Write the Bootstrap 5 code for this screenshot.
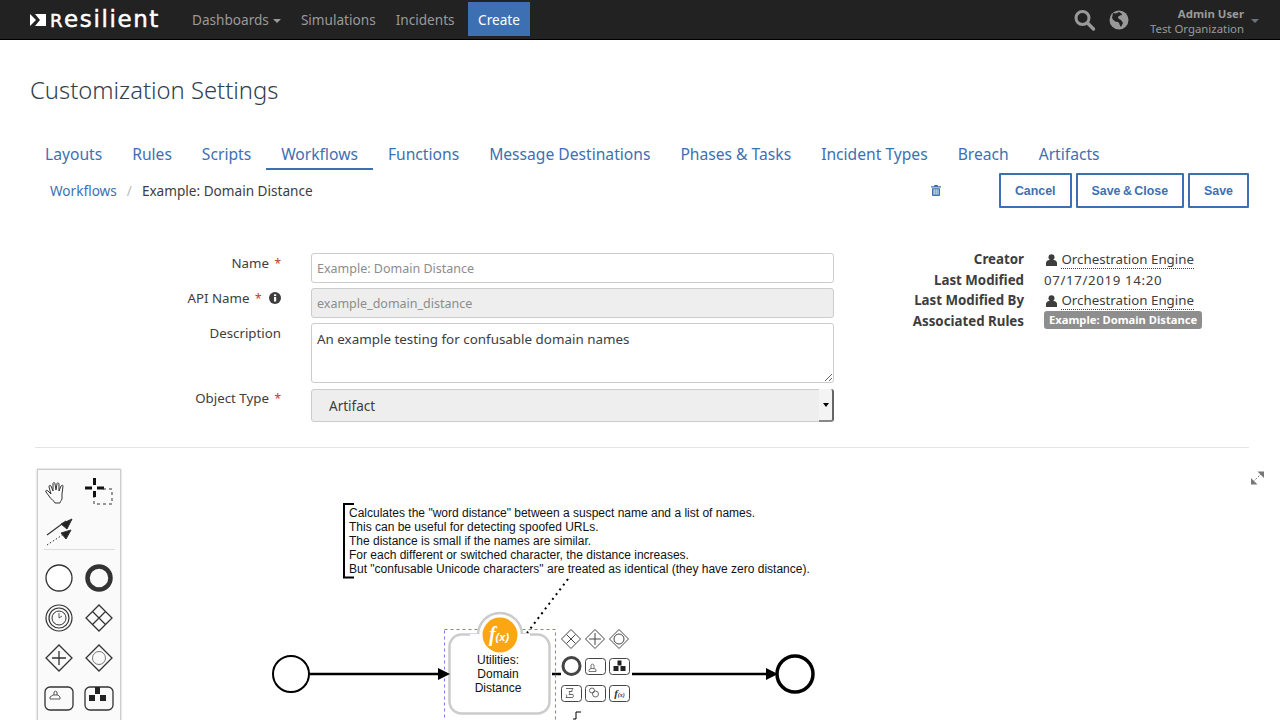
<!DOCTYPE html>
<html lang="en">
<head>
<meta charset="utf-8">
<title>Customization Settings</title>
<link rel="stylesheet" href="https://cdn.jsdelivr.net/npm/bootstrap@5.3.0/dist/css/bootstrap.min.css">
<style>
html,body{height:720px;overflow:hidden}
body{font-family:"Noto Sans",Roboto,sans-serif;font-size:14px;color:#3d3d3d;background:#fff}
.topbar{height:40px;background:#222;border-bottom:1px solid #000;padding:0 0 0 30px;align-items:flex-start;flex-wrap:nowrap}
.brand{display:flex;align-items:center;gap:4px;height:39px;width:152px;padding:0;margin:0;color:#fff;font:400 23px/1 "DejaVu Sans",sans-serif;letter-spacing:1.6px;-webkit-text-stroke:.5px #fff}
.brand:hover{color:#fff}
.brand b{font-weight:400;font-size:18px}
.topbar .nav-link{color:#9a9a9a;font-size:13.6px;padding:0 10px;line-height:39px;white-space:nowrap}
.topbar .nav-link.make{background:#3d70b2;color:#fff;height:34px;line-height:36px;margin:2px 0 0 3px;padding:0 10.500px}
.caret-dn{display:inline-block;border:4px solid transparent;border-top-color:currentColor;border-bottom:0;margin-left:4px;vertical-align:2px}
.who{color:#9a9a9a;text-align:right;font-size:11.4px;line-height:15px;padding-top:6px;white-space:nowrap}
.who b{display:block;font-weight:700}
.page-head{font-family:"Noto Sans",sans-serif;font-weight:300;font-size:23.8px;line-height:30px;color:#2f3f4f;margin:35px 30px 0;height:30px}
.tabbar{margin:34px 30px 0;gap:0;flex-wrap:nowrap}
.tabbar .nav-link{font-size:15.63px;line-height:20px;color:#3d70b2;padding:5px 15px;border-bottom:2px solid transparent;white-space:nowrap;height:31px}
.tabbar .nav-link.active{border-bottom-color:#3d70b2}
.crumb-row{margin:3px 31px 0 30px;height:35px;align-items:center}
.crumb-row .breadcrumb{margin:2px 0 0 20px;font-size:13.6px;--bs-breadcrumb-divider-color:#bbb;--bs-breadcrumb-item-active-color:#3d3d3d;--bs-breadcrumb-item-padding-x:10px}
.crumb-row .breadcrumb a{color:#3d70b2;text-decoration:none}
.act{border:2px solid #3d70b2;color:#3d70b2;background:#fff;border-radius:1px;font:700 12.4px/1 "Liberation Sans",sans-serif;height:35px;padding:2px 14px 0;word-spacing:-1px}
.act:hover{color:#3d70b2;background:#fff;border-color:#3d70b2}
.bin{margin-right:58px;color:#3d70b2;line-height:1}
.form-area{margin:45px 30px 0;align-items:flex-start}
.fgrid{display:grid;grid-template-columns:251px 523px;column-gap:30px;row-gap:5px;width:804px}
.fgrid label{text-align:right;font-size:13.3px;line-height:20px;padding-top:0;margin:0;white-space:nowrap}
.fgrid label i{color:#c0392b;font-style:normal;font-size:12px;margin-left:2px}
.fgrid .form-control,.fgrid .form-select{border:1px solid #ccc;border-radius:3px;font-size:12.5px;padding:0 5px;height:30px;color:#3d3d3d;box-shadow:none}
.fgrid .form-control::placeholder{color:#8c8c8c}
.fgrid .form-control:disabled{background:#eee;color:#8c8c8c;opacity:1}
.fgrid textarea.form-control{height:60px;padding-top:5px;font-size:13.4px;line-height:20px;resize:vertical}
.fgrid .form-select{height:33px;background:#eee;padding-left:17px;padding-top:2px;margin-top:1px;font-size:13.5px;width:523px}
.picker{position:relative;height:34px}
.picker span{position:absolute;right:0;top:1px;width:15px;height:33px;border-right:2px solid #666;border-bottom:2px solid #888;border-radius:0 3px 3px 0;background:#f4f4f4;display:flex;align-items:center;justify-content:center}
.picker span::after{content:"";border:3px solid transparent;border-top:4px solid #000;border-bottom:0}
.meta{display:grid;grid-template-columns:190px auto;column-gap:20px;font-size:13.3px;line-height:20.5px;margin-top:-4px}
.meta dt{text-align:right;font-weight:700;margin:0}
.meta dd{margin:0;white-space:nowrap}
.stamp{letter-spacing:.62px}
.owner{border-bottom:1px dotted #3d3d3d;display:inline-block;line-height:17px}
.who-ico{margin:0 1px 0 2px}
.tag{display:inline-block;background:#8e8e8e;color:#fff;font-weight:700;font-size:11.2px;line-height:18px;border-radius:3px;padding:0 5px;vertical-align:top;margin-top:0}
.rule-line{margin:25px 31px 0 35px;border-top:1px solid #e5e5e5;opacity:1}
.canvas{position:relative;height:272px}
.canvas svg.flow{position:absolute;left:0;top:0;width:1280px;height:272px}
.canvas text{font-family:"Liberation Sans",Arial,sans-serif;font-size:12px;fill:#111}
.palette{position:absolute;left:37px;top:21px;width:84px;height:260px;background:#fafafa;border:1px solid #ccc;box-shadow:0 0 2px rgba(0,0,0,.25)}
.palette svg{display:block}
</style>
</head>
<body>
<nav class="navbar topbar d-flex">
  <a class="brand text-decoration-none" href="#">
    <svg width="16" height="14" viewBox="0 0 16 14"><polygon points="0,1 6,7 0,13" fill="#fff"/><polygon points="5,1 16,1 16,13 5,13 10,7" fill="#fff"/></svg>
    <span><b>R</b>esilient</span>
  </a>
  <ul class="nav flex-nowrap">
    <li class="nav-item"><a class="nav-link" href="#">Dashboards<span class="caret-dn"></span></a></li>
    <li class="nav-item"><a class="nav-link" href="#">Simulations</a></li>
    <li class="nav-item"><a class="nav-link" href="#">Incidents</a></li>
    <li class="nav-item"><a class="nav-link make" href="#">Create</a></li>
  </ul>
  <div class="d-flex ms-auto align-items-start">
    <svg class="mt-2" width="24" height="24" viewBox="0 0 24 24" fill="none" stroke="#999"><circle cx="9.500" cy="10" r="6.500" stroke-width="3"/><path d="M14.500 15l6 6" stroke-width="3.400" stroke-linecap="round"/></svg>
    <svg class="mt-2" style="margin-left:12px" width="20" height="24" viewBox="0 0 20 24"><circle cx="10" cy="12" r="9.500" fill="#999"/><path d="M4 5c3 1 4 0 6-1 1 1 3 1 3 3-2 0-3 1-4 2 0 2 2 2 3 3l2 3-2 4c-2-2-1-4-3-5-3 0-5-2-6-4z" fill="#222"/></svg>
    <div class="who" style="margin-left:21px"><b>Admin User</b>Test Organization</div>
    <span class="caret-dn text-secondary" style="margin:19px 21px 0 7px"></span>
  </div>
</nav>

<h1 class="page-head">Customization Settings</h1>

<ul class="nav tabbar">
  <li class="nav-item"><a class="nav-link" href="#">Layouts</a></li>
  <li class="nav-item"><a class="nav-link" href="#">Rules</a></li>
  <li class="nav-item"><a class="nav-link" href="#">Scripts</a></li>
  <li class="nav-item"><a class="nav-link active" href="#">Workflows</a></li>
  <li class="nav-item"><a class="nav-link" href="#">Functions</a></li>
  <li class="nav-item"><a class="nav-link" href="#">Message Destinations</a></li>
  <li class="nav-item"><a class="nav-link" href="#">Phases &amp; Tasks</a></li>
  <li class="nav-item"><a class="nav-link" href="#">Incident Types</a></li>
  <li class="nav-item"><a class="nav-link" href="#">Breach</a></li>
  <li class="nav-item"><a class="nav-link" href="#">Artifacts</a></li>
</ul>

<div class="d-flex crumb-row">
  <ol class="breadcrumb">
    <li class="breadcrumb-item"><a href="#">Workflows</a></li>
    <li class="breadcrumb-item active">Example: Domain Distance</li>
  </ol>
  <svg class="bin ms-auto" width="10" height="11" viewBox="0 0 10 11" fill="#3d70b2"><path d="M3.500 0h3l.6 1.300H10v1.200H0V1.300h2.900zM1 3.200h8V10a1 1 0 0 1-1 1H2a1 1 0 0 1-1-1zm1.600 1v5.600h1V4.200zm2 0v5.600h1V4.200zm2 0v5.600h.9V4.200z"/></svg>
  <div class="d-flex gap-1">
    <button class="btn act" type="button">Cancel</button>
    <button class="btn act" type="button">Save &amp; Close</button>
    <button class="btn act" type="button">Save</button>
  </div>
</div>

<div class="d-flex form-area">
  <form class="fgrid">
    <label>Name <i>*</i></label>
    <input class="form-control" placeholder="Example: Domain Distance">
    <label>API Name <i>*</i>
      <svg class="ms-1" width="12" height="12" viewBox="0 0 12 12" style="vertical-align:-1px"><circle cx="6" cy="6" r="6" fill="#3d3d3d"/><rect x="5" y="5" width="2.200" height="4.500" fill="#fff"/><rect x="5" y="2.300" width="2.200" height="1.800" fill="#fff"/></svg></label>
    <input class="form-control" disabled value="example_domain_distance">
    <label>Description</label>
    <textarea class="form-control">An example testing for confusable domain names</textarea>
    <label>Object Type <i>*</i></label>
    <div class="picker"><select class="form-select"><option>Artifact</option></select><span></span></div>
  </form>
  <dl class="meta mb-0">
    <dt>Creator</dt><dd><svg width="11" height="12" viewBox="0 0 11 12" class="who-ico"><circle cx="5.500" cy="3.200" r="3" fill="#3d3d3d"/><path d="M0 12V9c0-2 2-3 3-3h5c1 0 3 1 3 3v3z" fill="#3d3d3d"/></svg> <span class="owner">Orchestration Engine</span></dd>
    <dt>Last Modified</dt><dd class="stamp">07/17/2019 14:20</dd>
    <dt>Last Modified By</dt><dd><svg width="11" height="12" viewBox="0 0 11 12" class="who-ico"><circle cx="5.500" cy="3.200" r="3" fill="#3d3d3d"/><path d="M0 12V9c0-2 2-3 3-3h5c1 0 3 1 3 3v3z" fill="#3d3d3d"/></svg> <span class="owner">Orchestration Engine</span></dd>
    <dt>Associated Rules</dt><dd><span class="tag">Example: Domain Distance</span></dd>
  </dl>
</div>

<hr class="rule-line mb-0">

<div class="canvas">
  <svg class="flow" viewBox="0 448 1280 272" fill="none">
    <path d="M354 504h-10v73.500h10" stroke="#000" stroke-width="2"/>
    <text x="349" y="517">Calculates the "word distance" between a suspect name and a list of names.</text>
    <text x="349" y="531">This can be useful for detecting spoofed URLs.</text>
    <text x="349" y="545">The distance is small if the names are similar.</text>
    <text x="349" y="559">For each different or switched character, the distance increases.</text>
    <text x="349" y="573">But "confusable Unicode characters" are treated as identical (they have zero distance).</text>
    <path d="M568 579L527 633" stroke="#000" stroke-width="2" stroke-dasharray="2 4"/>
    <circle cx="291" cy="674" r="18" fill="#fff" stroke="#000" stroke-width="2"/>
    <path d="M309 674H440M552 674H561M632 674H768" stroke="#000" stroke-width="2.500"/>
    <rect x="444.500" y="629.500" width="111" height="110" stroke="#7a7aee" stroke-dasharray="3 3"/>
    <rect x="449.500" y="634.500" width="100" height="79" rx="12" fill="#fff" stroke="#ccc" stroke-width="2.500"/>
    <circle cx="500" cy="635" r="22" fill="#fff" stroke="#ccc" stroke-width="2.500"/>
    <rect x="470" y="634" width="60" height="24" fill="#fff"/>
    <circle cx="500" cy="635" r="17.500" fill="#fca614"/>
    <text x="499" y="641" text-anchor="middle" style="font:italic 700 20px 'Liberation Serif',serif;fill:#fff">f<tspan style="font:italic 700 11px 'Liberation Sans',sans-serif">(x)</tspan></text>
    <path d="M438 668l12 6-12 6zM766 668l12 6-12 6z" fill="#000"/>
    <text x="498" y="664" text-anchor="middle">Utilities:</text>
    <text x="498" y="678" text-anchor="middle">Domain</text>
    <text x="498" y="692" text-anchor="middle">Distance</text>
    <circle cx="795" cy="674" r="18" fill="#fff" stroke="#000" stroke-width="3.500"/>
    <g stroke="#444" stroke-width="1">
      <path d="M571 629.500l9.500 9.500-9.500 9.500-9.500-9.500zM566.500 634.500l9 9M575.500 634.500l-9 9"/>
      <path d="M595 629.500l9.500 9.500-9.500 9.500-9.500-9.500zM595 633v12M589 639h12"/>
      <path d="M619 629.500l9.500 9.500-9.500 9.500-9.500-9.500z"/><circle cx="619" cy="639" r="5"/>
    </g>
    <circle cx="571.500" cy="666" r="8.500" stroke="#444" stroke-width="3"/>
    <g stroke="#444">
      <rect x="585.500" y="658.500" width="20" height="16" rx="3"/>
      <rect x="609.500" y="658.500" width="20" height="16" rx="3"/>
      <rect x="561.500" y="685.500" width="20" height="16" rx="3"/>
      <rect x="585.500" y="685.500" width="20" height="16" rx="3"/>
      <rect x="609.500" y="685.500" width="20" height="16" rx="3"/>
      <path d="M591 668.500v-3.500a2 2 0 0 1 3 0v3.500M589 671.500v-2l2-1h3l2 1v2z" stroke-width=".7"/>
      <path d="M566 688.500h7c-1 1-1 2-1 3h-3c1 1 1 2 0 3h4c1 2 0 3-1 3h-6c1-1 1-2 0-3" stroke-width=".8"/>
      <circle cx="592" cy="690.500" r="2.500" stroke-width=".8"/><circle cx="595.500" cy="694" r="3" stroke-width=".8"/>
    </g>
    <path d="M617.500 660.500h4v5h-4zM613.500 666h5v5h-5zM620.500 666h5v5h-5z" fill="#222"/>
    <text x="619.500" y="697" text-anchor="middle" style="font:italic 700 11px 'Liberation Serif',serif;fill:#333">f<tspan style="font-size:6px">(x)</tspan></text>
    <path d="M573 719h3v-7h5" stroke="#000"/>
    <path d="M1253 482l9-9" stroke="#777" stroke-width="1" stroke-dasharray="2 1.500"/>
    <path d="M1251 478v6.500h6.500zM1264 478v-6.500h-6.500z" fill="#777"/>
  </svg>
  <div class="palette">
    <svg width="82" height="258" viewBox="38 470 82 258" fill="none" stroke="#333">
      <path d="M55 503c-1-3-4-3-6-7l-3-4c-1-2 1-2 2-1l3 3-2-7c0-2 1-2 2-1l2 5 0-7c0-2 2-2 2 0l1 6 1-6c0-2 2-1 2 0l0 7 2-5c1-1 2-1 2 0l-1 8 0 5c-1 2-2 3-2 4z"/>
      <path d="M85 488h7M97 488h7M94.500 478v7M94.500 491v6" stroke="#111" stroke-width="3"/>
      <path d="M103 489h9v15H94v-7" stroke-dasharray="3 3"/>
      <path d="M47 535l19-14" stroke-width="1.200"/><path d="M61 524l11-5-5 10z" fill="#222"/>
      <path d="M47 545l20-13" stroke-dasharray="1.500 2"/><path d="M61 533l10-3-5 9z" fill="#222"/>
      <path d="M44 549.500h71" stroke="#ddd"/>
      <circle cx="59" cy="578" r="13" fill="#fff" stroke-width="1.300"/>
      <circle cx="99" cy="578" r="11.500" stroke-width="4.500"/>
      <circle cx="59" cy="618" r="13" stroke-width="1.200"/><circle cx="59" cy="618" r="10" stroke-width="1.200"/><circle cx="59" cy="618" r="7"/><path d="M59 613v5l3-2" stroke-width=".8"/>
      <path d="M99 605l13 13-13 13-13-13zM93 612l12 12M105 612l-12 12" stroke-width="1.300"/>
      <path d="M59 645l13 13-13 13-13-13zM59 651v14M52 658h14" stroke-width="1.300"/>
      <path d="M99 645l13 13-13 13-13-13z" stroke-width="1.300"/><circle cx="99" cy="658" r="6.500" stroke="#777"/>
      <rect x="45" y="687" width="28" height="23" rx="5" stroke-width="1.300"/>
      <path d="M54 695v-3a2 2 0 0 1 3 0v3M50 699v-2l3-2h5l2 2v2z" stroke-width=".8"/>
      <rect x="85" y="687" width="28" height="23" rx="5" stroke-width="1.300"/>
      <path d="M95 687h5v7h-5zM89 695h6v6h-6zM100 695h6v6h-6z" fill="#222" stroke="none"/>
    </svg>
  </div>
</div>
<script src="https://cdn.jsdelivr.net/npm/bootstrap@5.3.0/dist/js/bootstrap.bundle.min.js"></script>
</body>
</html>
